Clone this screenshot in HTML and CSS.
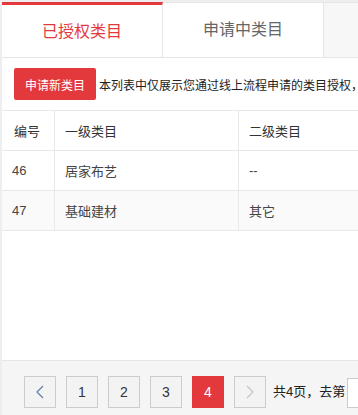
FILE: index.html
```html
<!DOCTYPE html>
<html lang="zh-CN">
<head>
  <meta charset="UTF-8" />
  <meta name="viewport" content="width=device-width, initial-scale=1">
  <title>已授权类目</title>
  <link rel="stylesheet" href="styles.css">
</head>
<body>

  <div class="page">
    <div class="tabs">
      <div class="tab active">已授权类目</div>
      <div class="tab">申请中类目</div>
    </div>

    <div class="content">
      <div class="toolbar">
        <button class="btn-apply">申请新类目</button>
        <span class="tip">本列表中仅展示您通过线上流程申请的类目授权，</span>
      </div>

      <table class="grid">
        <thead>
          <tr>
            <th class="col-no">编号</th>
            <th class="col-first">一级类目</th>
            <th class="col-second">二级类目</th>
          </tr>
        </thead>
        <tbody>
          <tr>
            <td>46</td>
            <td>居家布艺</td>
            <td>--</td>
          </tr>
          <tr class="even">
            <td>47</td>
            <td>基础建材</td>
            <td>其它</td>
          </tr>
        </tbody>
      </table>
    </div>

    <div class="pager">
      <a class="page-btn prev">
        <svg width="8" height="14" viewBox="0 0 8 14"><polyline points="7,1 1,7 7,13" fill="none" stroke="#5a7fa8" stroke-width="1.2"/></svg>
      </a>
      <a class="page-btn">1</a>
      <a class="page-btn">2</a>
      <a class="page-btn">3</a>
      <a class="page-btn current">4</a>
      <a class="page-btn next">
        <svg width="8" height="14" viewBox="0 0 8 14"><polyline points="1,1 7,7 1,13" fill="none" stroke="#c4c4c4" stroke-width="1.2"/></svg>
      </a>
      <span class="total">共4页，去第</span>
      <input class="goto" type="text">
    </div>
  </div>

</body>
</html>
```

FILE: styles.css
```css
body {
  margin: 0;
  background: #eeeeee;
  font-family: "Liberation Sans", "Noto Sans CJK SC", sans-serif;
  color: #333;
  overflow: hidden;
}

.page {
  margin-left: 2px;
  padding-top: 2px;
  width: 640px;
}

/* tabs */
.tabs {
  display: flex;
  background: #f7f7f7;
  border-top: 1px solid #e8e8e8;
  border-bottom: 1px solid #e6e6e6;
}

.tab {
  width: 160px;
  height: 54px;
  line-height: 54px;
  text-align: center;
  font-size: 16px;
  color: #666;
  background: #fff;
  border-right: 1px solid #e6e6e6;
}

.tab.active {
  color: #e4393c;
  height: 51px;
  line-height: 51px;
  border-top: 3px solid #e4393c;
  margin-top: -1px;
  padding-top: 1px;
}

/* list */
.content {
  background: #fff;
  height: 302px;
}

.toolbar {
  display: flex;
  align-items: center;
  padding: 10px 0 10px 12px;
  white-space: nowrap;
}

.btn-apply {
  width: 82px;
  height: 32px;
  padding: 0;
  border: none;
  border-radius: 2px;
  background: #e4393c;
  color: #fff;
  font-family: inherit;
  font-size: 12px;
}

.tip {
  margin-left: 3px;
  font-size: 12px;
  color: #222;
}

.grid {
  border-collapse: collapse;
  width: 100%;
  font-size: 13px;
}

.grid th,
.grid td {
  height: 39px;
  padding: 0 10px;
  text-align: left;
  border: 1px solid #e8e8e8;
  border-left: none;
}

.grid th {
  font-weight: normal;
  color: #333;
}

.grid td {
  color: #444;
}

.grid .col-no { width: 30px; padding-left: 12px; }
.grid .col-first { width: 163px; }

.grid tr.even td { background: #fafafa; }

/* pagination */
.pager {
  display: flex;
  align-items: flex-start;
  gap: 10px;
  height: 64px;
  padding: 15px 0 0 22px;
  box-sizing: border-box;
  background: #f5f5f5;
  border-top: 1px solid #e6e6e6;
  font-size: 13px;
}

.page-btn {
  display: flex;
  align-items: center;
  justify-content: center;
  width: 30px;
  height: 30px;
  border: 1px solid #cccccc;
  background: #f3f3f3;
  color: #333;
  font-size: 14px;
}

.page-btn.current {
  background: #e4393c;
  border-color: #e4393c;
  color: #fff;
}

.total {
  margin-left: -3px;
  line-height: 32px;
  color: #222;
}

.goto {
  margin: 2px 0 0 -8px;
  width: 40px;
  height: 28px;
  padding: 0;
  border: 1px solid #cccccc;
  background: #fff;
}
```
